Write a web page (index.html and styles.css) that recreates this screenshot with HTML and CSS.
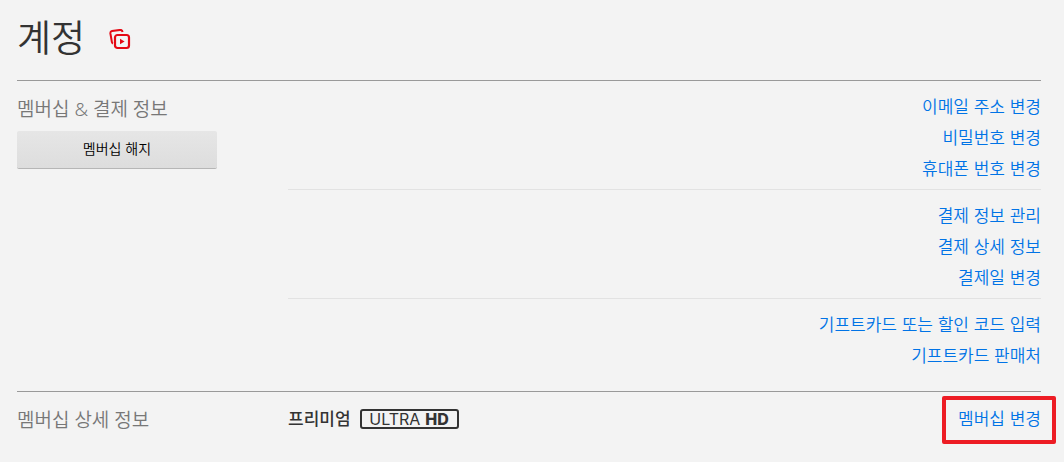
FILE: index.html
```html
<!DOCTYPE html>
<html lang="ko">
<head>
    <meta charset="UTF-8">
    <meta name="viewport" content="width=device-width, initial-scale=1.0">
    <title>계정</title>
    <link rel="stylesheet" href="styles.css">
</head>
<body>
    <main class="account">
        <header class="account-header">
            <h1>계정</h1>
            <svg class="member-icon" viewBox="0 0 22 22" width="22" height="22" aria-hidden="true">
                <path d="M4 14.5 Q3.1 14.1 2.9 13.1 L1.4 4.5 Q1.1 2.5 3 2.1 L11 .9 Q13.2 .7 13.6 3" fill="none" stroke="#e50914" stroke-width="2"/>
                <rect x="6" y="6" width="14" height="13" rx="2.5" fill="none" stroke="#e50914" stroke-width="2.2"/>
                <path d="M11 9.7 L15.6 12.5 L11 15.3 Z" fill="#e50914"/>
            </svg>
        </header>

        <section class="section">
            <div class="section-side">
                <h2>멤버십 &amp; 결제 정보</h2>
                <button class="btn-cancel" type="button">멤버십 해지</button>
            </div>
            <div class="section-content">
                <ul class="link-group">
                    <li><a href="#">이메일 주소 변경</a></li>
                    <li><a href="#">비밀번호 변경</a></li>
                    <li><a href="#">휴대폰 번호 변경</a></li>
                </ul>
                <ul class="link-group">
                    <li><a href="#">결제 정보 관리</a></li>
                    <li><a href="#">결제 상세 정보</a></li>
                    <li><a href="#">결제일 변경</a></li>
                </ul>
                <ul class="link-group">
                    <li><a href="#">기프트카드 또는 할인 코드 입력</a></li>
                    <li><a href="#">기프트카드 판매처</a></li>
                </ul>
            </div>
        </section>

        <section class="section">
            <div class="section-side">
                <h2>멤버십 상세 정보</h2>
            </div>
            <div class="section-content plan">
                <div class="plan-name">
                    <b>프리미엄</b>
                    <span class="badge"><span>ULTRA</span><b>HD</b></span>
                </div>
                <a class="highlight" href="#">멤버십 변경</a>
            </div>
        </section>
    </main>
</body>
</html>
```

FILE: styles.css
```css
* {
    box-sizing: border-box;
}
body {
    margin: 0;
    background-color: #f3f3f3;
    color: #333;
    font-family: "Liberation Sans", "Noto Sans CJK KR", sans-serif;
    font-size: 17px;
    font-weight: 350;
    line-height: 31px;
}
h1, h2, ul {
    margin: 0;
    padding: 0;
    font-weight: 350;
}
ul {
    list-style: none;
}
a {
    color: #0073e6;
    text-decoration: none;
}
.account {
    padding: 0 23px 0 17px;
}
.account-header {
    display: flex;
    align-items: center;
    gap: 24px;
    height: 80px;
}
h1 {
    font-size: 37px;
    line-height: 48px;
}
.section {
    display: grid;
    grid-template-columns: 200px 1fr;
    column-gap: 71px;
    padding: 11px 0 19px;
    border-top: 1px solid #999;
}
h2 {
    padding-top: 3px;
    color: #777;
    font-family: "Noto Sans", "Noto Sans CJK KR", sans-serif;
    font-size: 19px;
    line-height: 29px;
}
.btn-cancel {
    display: block;
    width: 100%;
    height: 37px;
    margin-top: 7px;
    padding: 0 0 2px;
    border: none;
    border-radius: 2px;
    background: linear-gradient(#e6e6e6, #ddd);
    box-shadow: 0 1px 0 rgba(0, 0, 0, 0.25);
    color: #000;
    font: inherit;
    font-size: 14px;
    line-height: 34px;
    cursor: pointer;
}
.link-group {
    text-align: right;
}
.link-group + .link-group {
    margin-top: 4px;
    padding-top: 11px;
    border-top: 1px solid #e2e2e2;
}
.plan, .plan-name {
    display: flex;
    align-items: center;
}
.plan {
    justify-content: space-between;
}
.plan-name {
    gap: 9px;
}
.plan-name b {
    font-weight: 500;
}
.badge {
    display: flex;
    align-items: center;
    justify-content: center;
    gap: 5px;
    width: 99px;
    height: 20px;
    border: 2px solid #333;
    border-radius: 3px;
    font-family: Inter, sans-serif;
    font-size: 16px;
    font-weight: 400;
    line-height: 16px;
}
.plan-name .badge b {
    font-weight: 800;
}
.highlight {
    position: relative;
}
/* frame around the change link */
.highlight::after {
    content: "";
    position: absolute;
    inset: -8px -15px -9px -16px;
    border: 4px solid #ed1c24;
    border-radius: 2px;
}
```
